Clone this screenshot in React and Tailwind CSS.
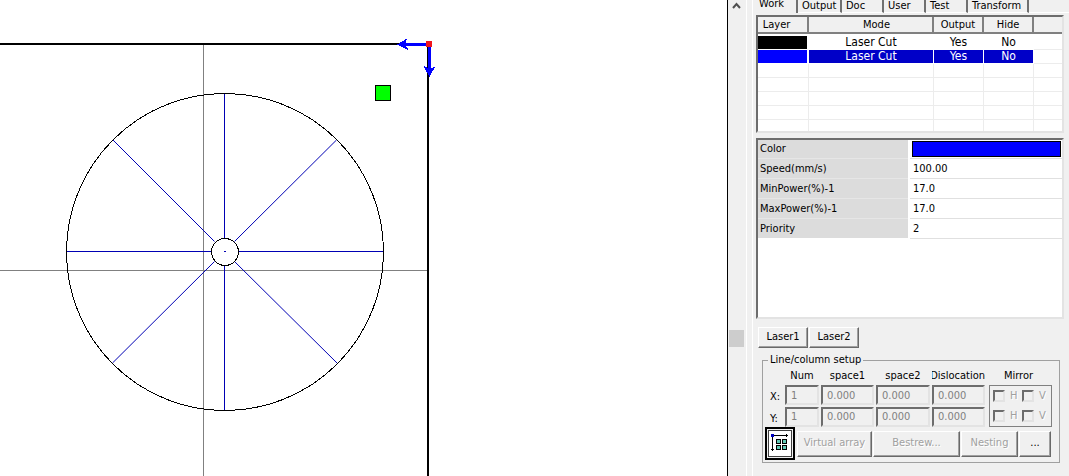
import { useState } from "react";

const tabs = [
  { name: "Work", width: "w-[45px]" },
  { name: "Output", width: "w-[44px]" },
  { name: "Doc", width: "w-[42px]" },
  { name: "User", width: "w-[42px]" },
  { name: "Test", width: "w-[42px]" },
  { name: "Transform", width: "w-[61px]" },
];

const layers = [
  { color: "bg-black", mode: "Laser Cut", output: "Yes", hide: "No" },
  { color: "bg-[#0000ff]", mode: "Laser Cut", output: "Yes", hide: "No" },
];

const params = [
  { label: "Speed(mm/s)", value: "100.00" },
  { label: "MinPower(%)-1", value: "17.0" },
  { label: "MaxPower(%)-1", value: "17.0" },
  { label: "Priority", value: "2" },
];

const sunken = "border-2 border-t-[#6d6d6d] border-l-[#6d6d6d] border-r-[#e3e3e3] border-b-[#e3e3e3]";
const raised = "border border-t-white border-l-white border-r-[#696969] border-b-[#696969] shadow-[inset_-1px_-1px_0_#a0a0a0]";
const faded = "text-[#a0a0a0] [text-shadow:1px_1px_0_white]";

function Canvas() {
  return (
    <main className="min-w-0 flex-1 border-r border-black bg-white">
      <svg className="block h-full w-full" shapeRendering="crispEdges" fill="none">
        {/* page guides */}
        <path d="M203.5 44V2000M0 270.5H428" stroke="#808080" />
        {/* work area edge */}
        <path d="M0 44H429M428 44V2000" stroke="black" strokeWidth="2" />
        {/* wheel */}
        <g stroke="#0000b4" shapeRendering="geometricPrecision">
          <path d="M224.5 94V238M224.5 266V410" />
          <path d="M67 251.5H211M239 251.5H383" />
          <path d="M113 140L214.5 241.5" />
          <path d="M336.5 140L234.5 241.5" />
          <path d="M112.5 363L214.5 261.5" />
          <path d="M337 363L234.5 261.5" />
          <path d="M224 251.5h2" />
        </g>
        <circle cx="225" cy="252" r="158.5" stroke="black" />
        <circle cx="225" cy="252" r="13.5" stroke="black" />
        {/* origin */}
        <path d="M429 44.5H401M429.5 44V73" stroke="#0000ff" strokeWidth="3" />
        <path d="M397 44.5L407 38.5L405 44.5L409 50.5ZM429.5 77L423.5 66L429.5 69L435.5 66Z" fill="#0000ff" />
        <rect x="426" y="41" width="6" height="6" fill="#f0141e" />
        <rect x="375.5" y="85.5" width="15" height="15" fill="#00ff00" stroke="black" />
      </svg>
    </main>
  );
}

function Scrollbar() {
  return (
    <div className="flex w-[19px] shrink-0 flex-col border-r border-white">
      <button aria-label="Scroll up" className="flex h-[10px] w-full items-center justify-center pr-px">
        <svg width="9" height="7" fill="none" stroke="#505050" strokeWidth="2">
          <path d="M1 6L4.5 2L8 6" />
        </svg>
      </button>
      <div className="mt-[320px] mr-[2px] ml-px h-[17px] bg-[#cdcdcd]" />
    </div>
  );
}

function LayerTable() {
  const [selected, setSelected] = useState(1);
  const head = "border-r-2 border-b-2 border-[#808080] bg-[#f0f0f0] p-0 font-normal";

  return (
    <div className={`h-[118px] overflow-hidden bg-white ${sunken}`}>
      <table className="w-full table-fixed border-separate border-spacing-0 text-center text-[12px] leading-[13px]">
        <thead className="text-[11px]">
          <tr className="h-[17px]">
            <th className={`w-[51px] pr-3 ${head}`}>Layer</th>
            <th className={`w-[125px] pl-3 ${head}`}>Mode</th>
            <th className={`w-[50px] ${head}`}>Output</th>
            <th className={`w-[50px] ${head}`}>Hide</th>
            <th className="border-b-2 border-[#808080] bg-[#f0f0f0] p-0" />
          </tr>
          <tr className="h-[2px]" />
        </thead>
        <tbody>
          {layers.map((layer, i) => {
            const fill = i === selected ? "bg-[#0000c8] text-white" : "";
            return (
              <tr key={i} className="h-[14px]" onClick={() => setSelected(i)}>
                <td className={`border-r-2 border-b border-white p-0 ${layer.color}`} />
                <td className={`border-r border-b border-white p-0 ${fill}`}>{layer.mode}</td>
                <td className={`border-r border-b border-white p-0 ${fill}`}>{layer.output}</td>
                <td className={`border-r border-b border-white p-0 ${fill}`}>{layer.hide}</td>
                <td className="border-b border-[#ececec] p-0" />
              </tr>
            );
          })}
          {[0, 1, 2, 3, 4].map((i) => (
            <tr key={i} className="h-[14px]">
              {[0, 1, 2, 3].map((c) => (
                <td key={c} className="border-r border-b border-[#ececec] p-0" />
              ))}
              <td className="border-b border-[#ececec] p-0" />
            </tr>
          ))}
        </tbody>
      </table>
    </div>
  );
}

function Params() {
  return (
    <div className={`mt-[5px] h-[181px] bg-white ${sunken}`}>
      <div className="flex h-[18px]">
        <span className="w-[150px] bg-[#dcdcdc] pl-[2px] leading-[17px]">Color</span>
        <button aria-label="Layer color" className="mt-px mr-px ml-[4px] h-[16px] flex-1 border border-black bg-[#0000ff]" />
      </div>
      {params.map((p) => (
        <label key={p.label} className="flex h-[20px]">
          <span className="w-[150px] border-t border-[#e6e6e6] bg-[#dcdcdc] pl-[2px] leading-[19px]">{p.label}</span>
          <input
            defaultValue={p.value}
            className="ml-[2px] min-w-0 flex-1 border-t border-[#e0e0e0] pt-px pl-[3px] outline-none"
          />
        </label>
      ))}
      <div className="ml-[152px] border-t border-[#e0e0e0]" />
    </div>
  );
}

function ArrayRow({ axis, num }) {
  const box = `h-[20px] min-w-0 bg-[#f0f0f0] pl-[4px] text-[#808080] ${sunken}`;
  return (
    <>
      <label htmlFor={`num-${axis}`} className="pt-1 pl-[5px] leading-[15px]">{axis}:</label>
      <input id={`num-${axis}`} disabled defaultValue={num} className={box} />
      <input aria-label={`${axis} space1`} disabled defaultValue="0.000" className={box} />
      <input aria-label={`${axis} space2`} disabled defaultValue="0.000" className={box} />
      <input aria-label={`${axis} dislocation`} disabled defaultValue="0.000" className={box} />
    </>
  );
}

function MirrorRow() {
  return (
    <div className="flex h-[20px] items-center pl-[3px]">
      {["H", "V"].map((d) => (
        <label key={d} className={`flex w-[29px] items-center gap-[5px] ${faded}`}>
          <input
            type="checkbox"
            disabled
            className={`h-[12px] w-[12px] shrink-0 appearance-none ${sunken}`}
          />
          {d}
        </label>
      ))}
    </div>
  );
}

function LineColumnSetup() {
  return (
    <fieldset className="mt-[5px] mr-1 ml-[6px] h-[110px] border border-[#a0a0a0] px-[2px]">
      <legend className="ml-[3px] px-[2px] leading-[14px]">Line/column setup</legend>
      <div className="flex gap-1">
        <div className="grid flex-1 grid-cols-[18px_34px_53px_54px_53px] gap-x-[2px] gap-y-px">
          <span />
          <span className="h-[17px] text-center leading-[17px]">Num</span>
          <span className="text-center leading-[17px]">space1</span>
          <span className="text-center leading-[17px]">space2</span>
          <span className="flex justify-end overflow-hidden leading-[17px]">Dislocation</span>
          <ArrayRow axis="X" num="1" />
          <ArrayRow axis="Y" num="1" />
        </div>
        <div className="mr-[5px] w-[63px]">
          <div className="h-[18px] pr-1 text-center leading-[17px]">Mirror</div>
          <div className="h-[42px] border border-[#808080]">
            <MirrorRow />
            <MirrorRow />
          </div>
        </div>
      </div>
      <div className="mr-[6px] flex items-center gap-[1px]">
        <button aria-label="Array direction" className="mr-px h-[33px] w-[30px] border-2 border-black bg-[#f0f0f0] p-px">
          <svg className="block" width="24" height="27" fill="none" shapeRendering="crispEdges">
            <rect x="0.5" y="0.5" width="23" height="26" fill="white" stroke="#404040" />
            <path d="M4.5 5V21M5 5.5H20M18.5 4V7M3 19.5H6" stroke="black" />
            <rect x="3" y="4" width="3" height="3" fill="#0000c0" />
            <g fill="#5fc8b4" stroke="black">
              <rect x="8.5" y="9.5" width="4" height="4" />
              <rect x="14.5" y="9.5" width="4" height="4" />
              <rect x="8.5" y="15.5" width="4" height="4" />
              <rect x="14.5" y="15.5" width="4" height="4" />
            </g>
          </svg>
        </button>
        <button disabled className={`h-[26px] w-[75px] ${raised} ${faded}`}>Virtual array</button>
        <button disabled className={`h-[26px] flex-1 ${raised} ${faded}`}>Bestrew...</button>
        <button disabled className={`h-[26px] w-[57px] ${raised} ${faded}`}>Nesting</button>
        <button className={`h-[26px] w-[32px] ${raised}`}>...</button>
      </div>
    </fieldset>
  );
}

function SidePanel() {
  return (
    <aside className="ml-[5px] w-[317px] shrink-0 border-l border-white pr-[5px] pl-[3px]">
      <nav className="-ml-[3px] flex h-[13px] items-end">
        {tabs.map((tab, i) => (
          <button
            key={tab.name}
            className={`flex h-[13px] items-end border-r-2 border-[#707070] whitespace-nowrap ${tab.width} ${
              i === 0 ? "pb-[3px] pl-[6px] leading-[12px]" : "border-b border-b-white pl-1 leading-[13px]"
            }`}
          >
            {tab.name}
          </button>
        ))}
        <div className="-mr-[5px] flex-1 border-b border-white" />
      </nav>
      <div className="pt-[2px]">
        <LayerTable />
        <Params />
        <div className="mt-[8px] ml-[2px] flex gap-px">
          <button className={`h-[21px] w-[50px] ${raised}`}>Laser1</button>
          <button className={`h-[21px] w-[50px] ${raised}`}>Laser2</button>
        </div>
        <LineColumnSetup />
      </div>
    </aside>
  );
}

export default function App() {
  return (
    <div className="flex h-screen overflow-hidden bg-[#f0f0f0] font-['DejaVu_Sans_Condensed','Noto_Sans',sans-serif] text-[11px] text-black">
      <Canvas />
      <Scrollbar />
      <SidePanel />
    </div>
  );
}
